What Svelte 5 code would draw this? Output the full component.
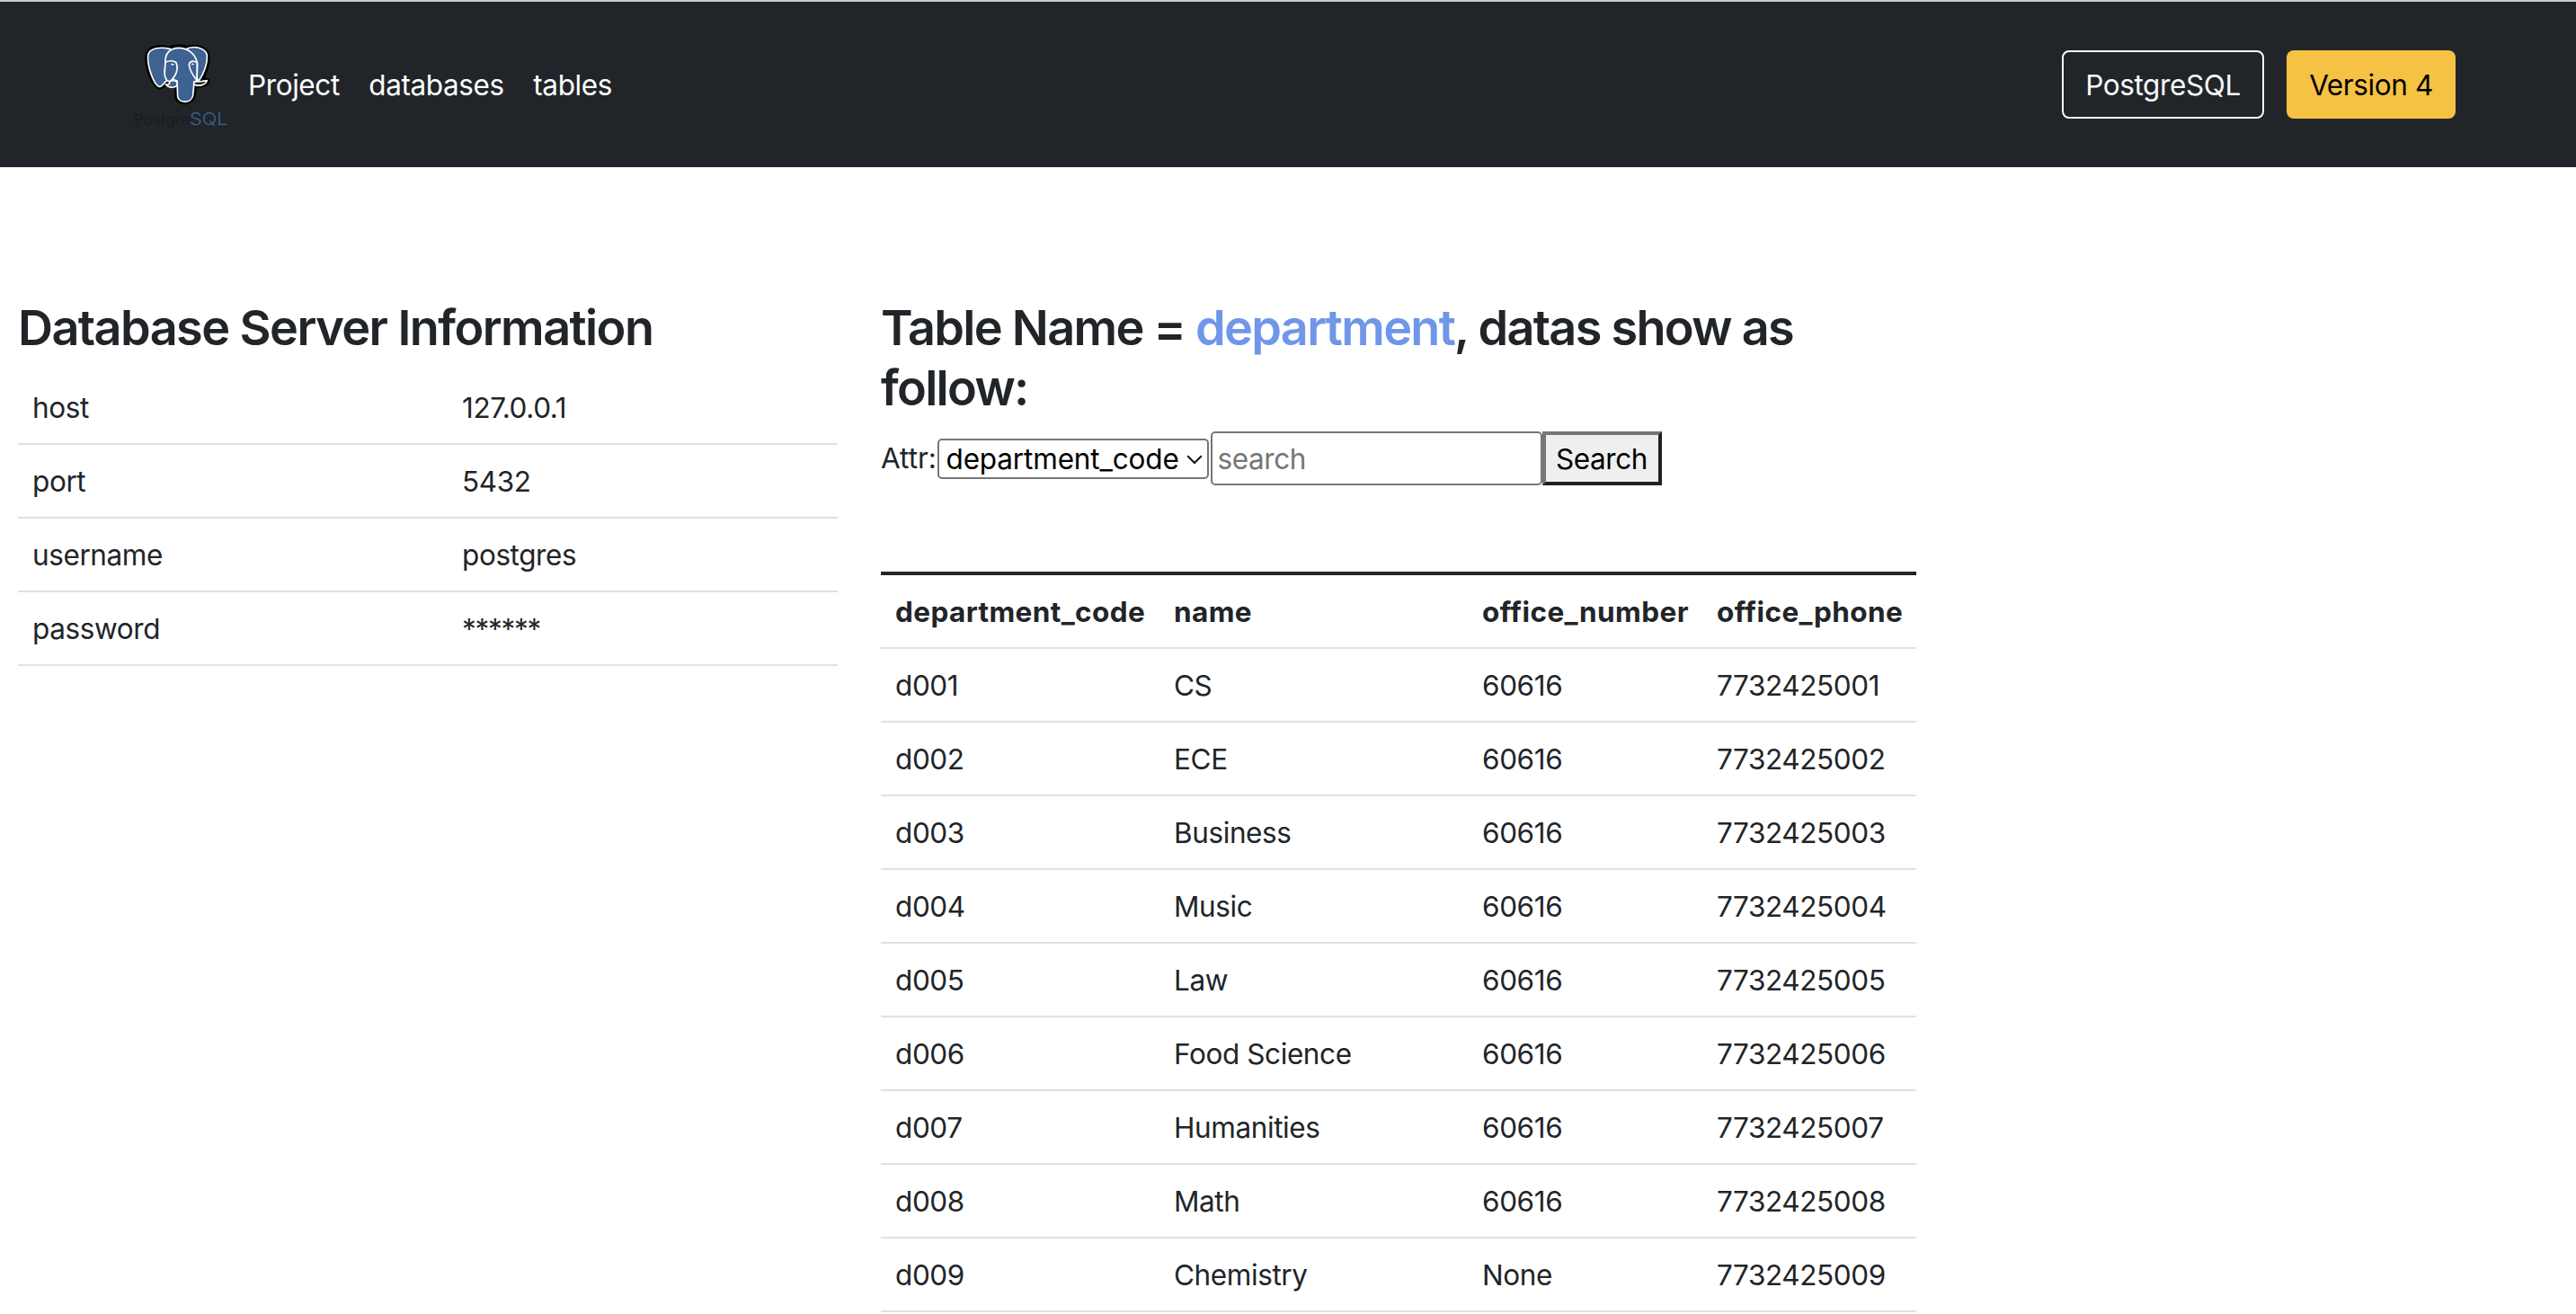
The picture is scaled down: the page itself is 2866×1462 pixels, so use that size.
<script>
  const links = ['Project', 'databases', 'tables'];

  const server = [
    ['host', '127.0.0.1'],
    ['port', '5432'],
    ['username', 'postgres'],
    ['password', '******'],
  ];

  const columns = ['department_code', 'name', 'office_number', 'office_phone'];

  const rows = [
    ['d001', 'CS', '60616', '7732425001'],
    ['d002', 'ECE', '60616', '7732425002'],
    ['d003', 'Business', '60616', '7732425003'],
    ['d004', 'Music', '60616', '7732425004'],
    ['d005', 'Law', '60616', '7732425005'],
    ['d006', 'Food Science', '60616', '7732425006'],
    ['d007', 'Humanities', '60616', '7732425007'],
    ['d008', 'Math', '60616', '7732425008'],
    ['d009', 'Chemistry', 'None', '7732425009'],
  ];
</script>

<div class="page">
  <header class="navbar">
    <svg class="logo" viewBox="0 0 420 360" aria-label="PostgreSQL">
      <g stroke-linejoin="round" stroke-linecap="round">
        <g fill="#000" stroke="#000" stroke-width="19">
          <path d="M165 72C140 65 108 72 104 94C100 130 118 175 132 192C142 204 150 198 158 188L182 178L202 182V232C204 256 250 256 254 228L260 190C280 196 298 192 300 180L278 178C292 155 304 120 301 95C297 70 260 64 238 72C215 66 185 66 165 78Z" />
        </g>
        <g fill="#3e6292" stroke="#fff" stroke-width="5">
          <path d="M180 74C150 66 108 68 104 94C101 128 118 175 132 192C142 204 148 200 156 190L172 172L196 130Z" />
          <path d="M234 72C262 62 297 70 301 95C303 122 290 157 272 182L252 130Z" />
          <path d="M162 118C160 88 178 70 206 70C240 70 264 92 269 124L267 178L258 184L254 228C250 256 206 256 203 232L201 180L180 172L160 152Z" />
          <path d="M162 118C174 111 192 112 198 119C204 134 201 150 194 162C189 171 182 178 176 184C162 178 158 162 160 146Z" />
          <path d="M268 119C254 111 243 114 241 126C243 146 254 162 267 178Z" />
        </g>
        <path d="M176 181C186 178 196 180 201 184V196C188 206 172 202 163 192C172 194 178 190 176 181Z" fill="#3e6292" stroke="#fff" stroke-width="5" />
        <path d="M257 184C268 180 278 184 286 181L301 179C296 193 274 200 257 192Z" fill="#22262a" stroke="#fff" stroke-width="5" />
        <path d="M180 124q7 -4 11 1q-6 7 -11 -1M248 124q5 -5 10 -1q-5 7 -10 1" fill="#fff" />
      </g>
      <text class="mark" x="57" y="328" font-size="48" textLength="186" lengthAdjust="spacingAndGlyphs" fill="#17191c">Postgre</text>
      <text class="mark" x="243" y="328" font-size="57" textLength="128" lengthAdjust="spacingAndGlyphs" fill="#3e6292">SQL</text>
    </svg>
    <nav>
      {#each links as link}
        <a href="#{link}">{link}</a>
      {/each}
    </nav>
    <div class="actions">
      <button class="btn outline">PostgreSQL</button>
      <button class="btn warning">Version 4</button>
    </div>
  </header>

  <main>
    <section class="server">
      <h3>Database Server Information</h3>
      <table>
        <tbody>
          {#each server as [key, value]}
            <tr><td>{key}</td><td class:masked={key === 'password'}>{value}</td></tr>
          {/each}
        </tbody>
      </table>
    </section>

    <section class="data">
      <h3>Table Name = <span class="accent">department</span><span>, datas show as</span> <span class="rest">follow:</span></h3>
      <form>
        <label for="attr">Attr:</label>
        <div class="select">
          <select id="attr"><option>department_code</option></select>
          <svg class="chevron" viewBox="0 0 18 11"><path d="M1.2 1.2L9 9L16.8 1.2" fill="none" stroke="#111" stroke-width="2" /></svg>
        </div>
        <input type="text" placeholder="search" />
        <button type="button" class="go">Search</button>
      </form>
      <table>
        <thead>
          <tr>{#each columns as column}<th>{column}</th>{/each}</tr>
        </thead>
        <tbody>
          {#each rows as row}
            <tr>{#each row as cell}<td>{cell}</td>{/each}</tr>
          {/each}
        </tbody>
      </table>
    </section>
  </main>
</div>

<style>
  :global(body) {
    margin: 0;
    background: #fff;
    overflow: hidden;
  }
  .page {
    height: 1462px;
    overflow: hidden;
    font: 400 31.5px/48px Inter, 'Liberation Sans', sans-serif;
    letter-spacing: -0.4px;
    color: #212529;
  }
  .page :is(button, input, select) {
    font: inherit;
    letter-spacing: inherit;
    margin: 0;
    box-sizing: border-box;
  }

  .navbar {
    display: flex;
    align-items: center;
    box-sizing: border-box;
    height: 186px;
    border-top: 2px solid #c9cccd;
    padding: 0 134px 0 130px;
    background: #212529;
  }
  .logo {
    width: 140px;
    height: 120px;
    margin-bottom: 8px;
  }
  .mark {
    font-family: Inter, sans-serif;
    font-weight: 300;
    letter-spacing: 0;
  }
  nav {
    display: flex;
    gap: 32.5px;
    margin-left: 6px;
    padding-top: 1px;
  }
  nav a {
    color: #fff;
    text-decoration: none;
  }
  .actions {
    display: flex;
    gap: 25px;
    margin-left: auto;
  }
  .btn {
    height: 76px;
    border-radius: 8px;
  }
  .page .btn {
    padding: 1px 0 0;
  }
  .page .outline {
    width: 225px;
    color: #f8f9fa;
    background: transparent;
    border: 2px solid #f8f9fa;
  }
  .page .warning {
    width: 188px;
    color: #000;
    background: #f6c244;
    border: 0;
  }

  main {
    display: flex;
    align-items: flex-start;
    gap: 48px;
    padding: 145px 0 0 20px;
  }
  .server {
    width: 912px;
  }
  .data {
    width: 1152px;
  }
  h3 {
    margin: 0 0 15px;
    font-size: 54px;
    line-height: 67px;
    font-weight: 600;
    letter-spacing: -1.58px;
  }
  .data h3 {
    letter-spacing: -1.7px;
  }
  .accent {
    color: #6f96e8;
  }
  .rest {
    display: block;
  }

  table {
    width: 100%;
    table-layout: fixed;
    border-collapse: separate;
    border-spacing: 0;
  }
  td,
  th {
    box-sizing: border-box;
    height: 82px;
    padding: 17px 16px 15px;
    border-bottom: 2px solid #dee2e6;
    text-align: left;
    white-space: nowrap;
  }
  th {
    letter-spacing: 0.4px;
  }
  .masked {
    letter-spacing: -1.3px;
  }
  .server td:first-child {
    width: 478px;
  }
  .data table {
    border-top: 4px solid #212529;
  }
  th:nth-child(1) {
    width: 310px;
  }
  th:nth-child(2) {
    width: 343px;
  }
  th:nth-child(3) {
    width: 261px;
  }

  form {
    display: flex;
    align-items: center;
    height: 60px;
    margin-bottom: 96px;
  }
  label {
    width: 62.5px;
    letter-spacing: 0;
  }
  .select {
    position: relative;
    width: 302px;
    margin-right: 2px;
  }
  select {
    display: block;
    appearance: none;
    width: 100%;
    height: 45px;
    border: 2px solid #767676;
    border-radius: 5px;
    background: #fff;
    color: #000;
  }
  .page select {
    padding: 0 0 0 8px;
    line-height: normal;
    letter-spacing: -0.15px;
  }
  .chevron {
    position: absolute;
    right: 7px;
    top: 18px;
    width: 18px;
    height: 11px;
  }
  input {
    width: 369px;
    height: 60px;
    padding: 2px 6px;
    border: 2px solid #767676;
    border-radius: 5px;
    background: #fff;
  }
  input::placeholder {
    color: #757575;
    opacity: 1;
  }
  .go {
    width: 133px;
    height: 60px;
    padding: 1px 0 0;
    border: 4px solid;
    border-color: #767676 #212121 #212121 #767676;
    background: #efefef;
    color: #000;
  }
</style>
